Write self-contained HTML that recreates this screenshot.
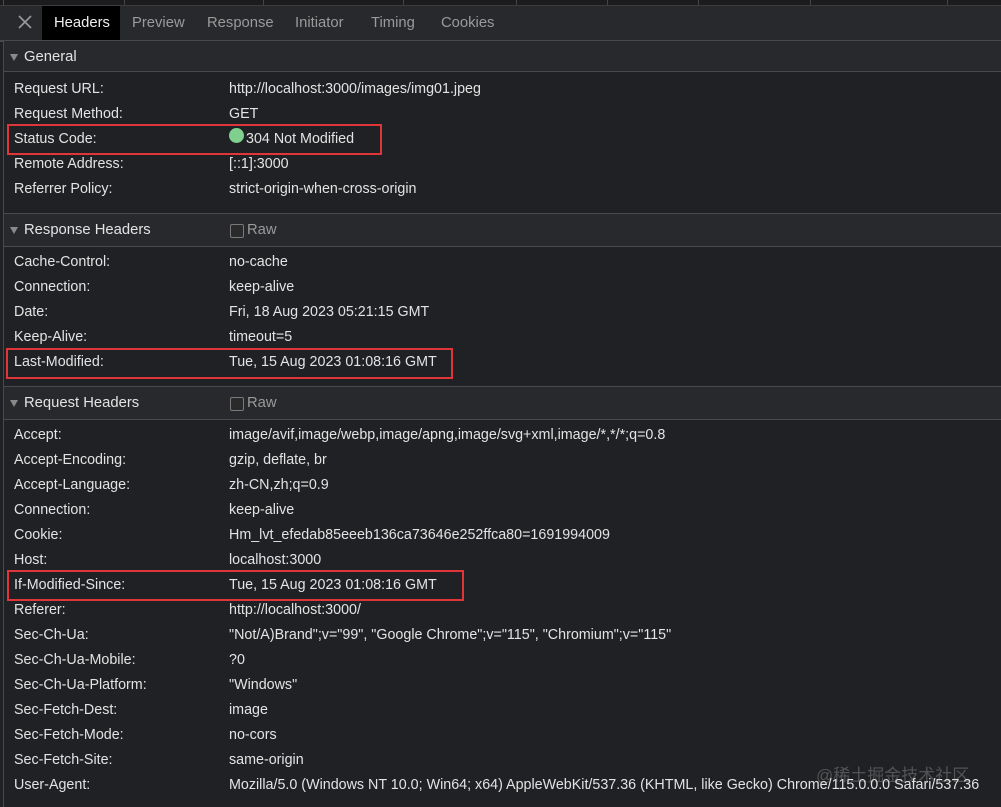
<!DOCTYPE html>
<html><head><meta charset="utf-8"><style>
body{margin:0;width:1001px;height:807px;background:#202124;overflow:hidden;position:relative;font-family:"Segoe UI","Liberation Sans","Noto Sans CJK SC",sans-serif;font-size:14.3px;color:#e3e3e3;}
.a{position:absolute;white-space:nowrap;}
.top{left:0;top:0;width:1001px;height:5px;background:#1c1c1e;border-bottom:1px solid #3c3c3c;}
.dv{top:0;height:5px;width:1px;background:#444;}
.tabs{left:0;top:6px;width:1001px;height:34px;background:#28292c;border-bottom:2px solid #4a4a4a;}
.tab{top:7px;height:34px;line-height:33px;color:#9a9a9a;font-size:14.8px;}
.lb{left:14px;margin-top:2px;}
.vl{left:229px;margin-top:2px;}
.sh{left:4px;width:997px;height:32px;background:#28292c;border-top:1px solid #4a4a4a;border-bottom:1px solid #4a4a4a;}
.st{left:24px;font-size:14.8px;color:#e3e3e3;margin-top:2px;}
.tri{left:10px;width:0;height:0;border-left:4.5px solid transparent;border-right:4.5px solid transparent;border-top:7px solid #8a8a8a;}
.cb{left:230px;width:12px;height:12px;border:1px solid #7a7a7a;border-radius:2px;background:#2a2a2a;}
.raw{left:247px;color:#9a9a9a;font-size:14.8px;margin-top:2px;}
.box{border:2px solid #e0363a;}
</style></head><body>
<div class="a top"></div>
<div class="a dv" style="left:124px"></div><div class="a dv" style="left:263px"></div><div class="a dv" style="left:403px"></div><div class="a dv" style="left:516px"></div><div class="a dv" style="left:607px"></div><div class="a dv" style="left:698px"></div><div class="a dv" style="left:810px"></div><div class="a dv" style="left:947px"></div>
<div class="a" style="left:3px;top:0;width:1px;height:807px;background:#4a4a4a"></div>
<div class="a tabs"></div>
<svg class="a" style="left:18px;top:15px" width="14" height="14"><path d="M1 1L13 13M13 1L1 13" stroke="#9a9a9a" stroke-width="1.6"/></svg>
<div class="a" style="left:42px;top:6px;width:78px;height:34px;background:#000"></div>
<div class="a tab" style="left:54px;color:#f0f0f0">Headers</div>
<div class="a tab" style="left:132px">Preview</div>
<div class="a tab" style="left:207px">Response</div>
<div class="a tab" style="left:295px">Initiator</div>
<div class="a tab" style="left:371px">Timing</div>
<div class="a tab" style="left:441px">Cookies</div>

<div class="a sh" style="top:41px;height:30px;border-top:none"></div>
<div class="a tri" style="top:54px"></div><div class="a st" style="top:47px">General</div>
<div class="a lb" style="top:79px">Request URL:</div><div class="a vl" style="top:79px">http://localhost:3000/images/img01.jpeg</div>
<div class="a lb" style="top:104px">Request Method:</div><div class="a vl" style="top:104px">GET</div>
<div class="a lb" style="top:129px">Status Code:</div><div class="a" style="left:229px;top:128px;width:15px;height:15px;border-radius:50%;background:#7fcf8f"></div><div class="a" style="left:246px;top:131px">304 Not Modified</div>
<div class="a box" style="left:7px;top:124px;width:371px;height:27px"></div>
<div class="a lb" style="top:154px">Remote Address:</div><div class="a vl" style="top:154px">[::1]:3000</div>
<div class="a lb" style="top:179px">Referrer Policy:</div><div class="a vl" style="top:179px">strict-origin-when-cross-origin</div>

<div class="a sh" style="top:213px"></div>
<div class="a tri" style="top:227px"></div><div class="a st" style="top:220px">Response Headers</div>
<div class="a cb" style="top:224px"></div><div class="a raw" style="top:220px">Raw</div>
<div class="a lb" style="top:252px">Cache-Control:</div><div class="a vl" style="top:252px">no-cache</div>
<div class="a lb" style="top:277px">Connection:</div><div class="a vl" style="top:277px">keep-alive</div>
<div class="a lb" style="top:302px">Date:</div><div class="a vl" style="top:302px">Fri, 18 Aug 2023 05:21:15 GMT</div>
<div class="a lb" style="top:327px">Keep-Alive:</div><div class="a vl" style="top:327px">timeout=5</div>
<div class="a lb" style="top:352px">Last-Modified:</div><div class="a vl" style="top:352px">Tue, 15 Aug 2023 01:08:16 GMT</div>
<div class="a box" style="left:6px;top:348px;width:443px;height:27px"></div>

<div class="a sh" style="top:386px"></div>
<div class="a tri" style="top:400px"></div><div class="a st" style="top:393px">Request Headers</div>
<div class="a cb" style="top:397px"></div><div class="a raw" style="top:393px">Raw</div>
<div class="a lb" style="top:425px">Accept:</div><div class="a vl" style="top:425px">image/avif,image/webp,image/apng,image/svg+xml,image/*,*/*;q=0.8</div>
<div class="a lb" style="top:450px">Accept-Encoding:</div><div class="a vl" style="top:450px">gzip, deflate, br</div>
<div class="a lb" style="top:475px">Accept-Language:</div><div class="a vl" style="top:475px">zh-CN,zh;q=0.9</div>
<div class="a lb" style="top:500px">Connection:</div><div class="a vl" style="top:500px">keep-alive</div>
<div class="a lb" style="top:525px">Cookie:</div><div class="a vl" style="top:525px">Hm_lvt_efedab85eeeb136ca73646e252ffca80=1691994009</div>
<div class="a lb" style="top:550px">Host:</div><div class="a vl" style="top:550px">localhost:3000</div>
<div class="a lb" style="top:575px">If-Modified-Since:</div><div class="a vl" style="top:575px">Tue, 15 Aug 2023 01:08:16 GMT</div>
<div class="a box" style="left:7px;top:570px;width:453px;height:27px"></div>
<div class="a lb" style="top:600px">Referer:</div><div class="a vl" style="top:600px">http://localhost:3000/</div>
<div class="a lb" style="top:625px">Sec-Ch-Ua:</div><div class="a vl" style="top:625px">"Not/A)Brand";v="99", "Google Chrome";v="115", "Chromium";v="115"</div>
<div class="a lb" style="top:650px">Sec-Ch-Ua-Mobile:</div><div class="a vl" style="top:650px">?0</div>
<div class="a lb" style="top:675px">Sec-Ch-Ua-Platform:</div><div class="a vl" style="top:675px">"Windows"</div>
<div class="a lb" style="top:700px">Sec-Fetch-Dest:</div><div class="a vl" style="top:700px">image</div>
<div class="a lb" style="top:725px">Sec-Fetch-Mode:</div><div class="a vl" style="top:725px">no-cors</div>
<div class="a lb" style="top:750px">Sec-Fetch-Site:</div><div class="a vl" style="top:750px">same-origin</div>
<div class="a lb" style="top:775px">User-Agent:</div><div class="a vl" style="top:775px">Mozilla/5.0 (Windows NT 10.0; Win64; x64) AppleWebKit/537.36 (KHTML, like Gecko) Chrome/115.0.0.0 Safari/537.36</div>
<div class="a" style="left:816px;top:761px;font-size:17px;color:rgba(200,200,200,0.3);font-family:'Liberation Sans','Noto Sans CJK SC',sans-serif">@稀土掘金技术社区</div>
</body></html>
